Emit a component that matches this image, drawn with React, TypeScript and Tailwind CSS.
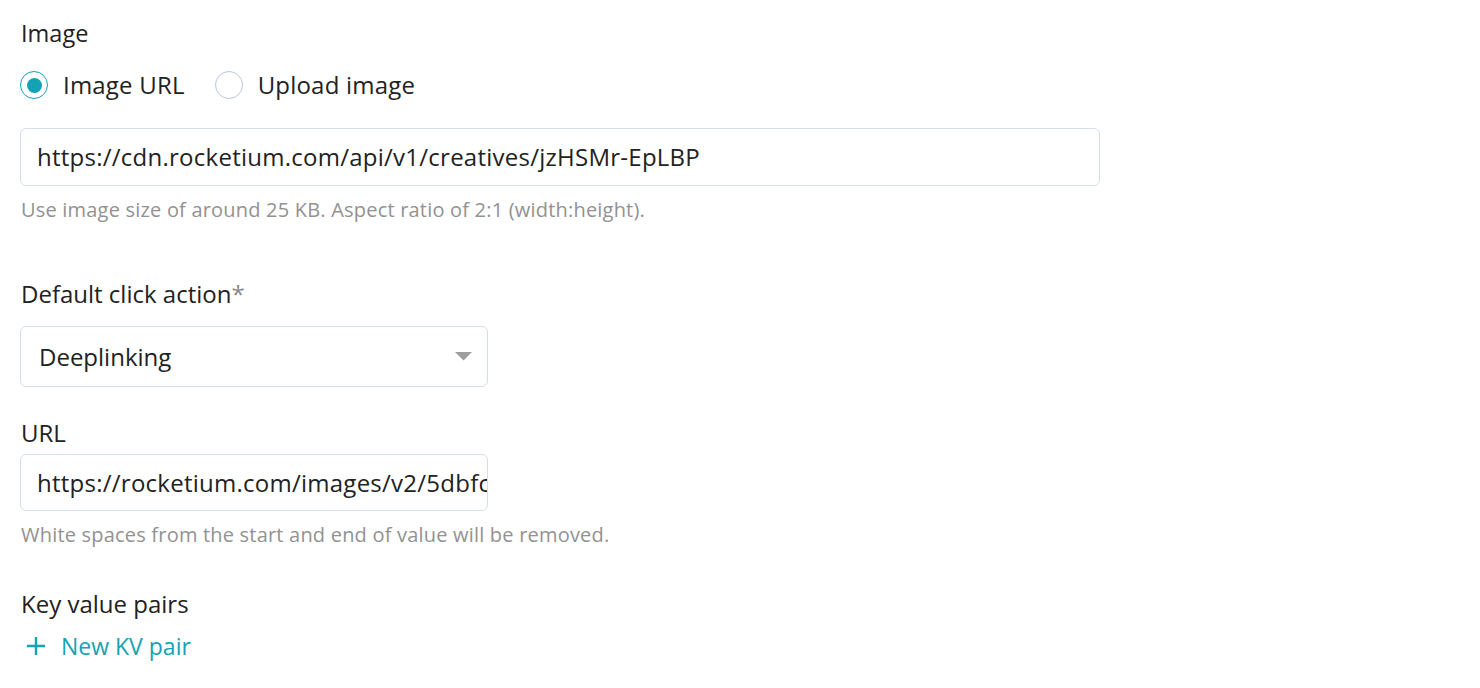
import React from "react";

const teal = "#14a3b4";

function Radio({ checked, label }: { checked: boolean; label: string }) {
  return (
    <div className="flex items-center">
      <div
        className={
          checked
            ? "w-[28px] h-[28px] rounded-full border-[1.5px] border-[#14a3b4] flex items-center justify-center"
            : "w-[28px] h-[28px] rounded-full border border-[#b9c6da] flex items-center justify-center"
        }
      >
        {checked && <div className="w-[15px] h-[15px] rounded-full bg-[#14a3b4]" />}
      </div>
      <span className="ml-[15px] text-[24px] tracking-[0.2px] leading-[28px] text-[#222]">{label}</span>
    </div>
  );
}

export default function App() {
  return (
    <div
      className="w-[1480px] h-[688px] bg-white overflow-hidden pl-[20px] pt-[17px]"
      style={{ fontFamily: "'Open Sans', sans-serif" }}
    >
      <div className="h-[32px] leading-[32px] text-[23.5px] text-[#222] pl-[1px]">Image</div>
      <div className="mt-[22px] flex items-center gap-[30px]">
        <Radio checked label="Image URL" />
        <Radio checked={false} label="Upload image" />
      </div>
      <div className="mt-[29px] w-[1080px] h-[58px] border border-[#d6dde9] rounded-[6px] pl-[16px] flex items-center text-[24px] tracking-[0.25px] text-[#222] whitespace-nowrap overflow-hidden">
        https://cdn.rocketium.com/api/v1/creatives/jzHSMr-EpLBP
      </div>
      <div className="mt-[12px] h-[24px] leading-[24px] text-[20px] tracking-[0.2px] text-[#929292] pl-[1px]">
        Use image size of around 25 KB. Aspect ratio of 2:1 (width:height).
      </div>

      <div className="mt-[56px] h-[32px] leading-[32px] text-[24px] text-[#222] pl-[1px]">
        Default click action<span className="text-[#888]">*</span>
      </div>
      <div className="mt-[16px] w-[468px] h-[61px] border border-[#d6dde9] rounded-[6px] pl-[18px] pr-[15px] flex items-center justify-between text-[24px] text-[#222]">
        <span>Deeplinking</span>
        <svg width="17" height="9" viewBox="0 0 17 9">
          <path d="M0 0 L17 0 L8.5 8.5 Z" fill="#9e9e9e" />
        </svg>
      </div>

      <div className="mt-[30px] h-[32px] leading-[32px] text-[24px] text-[#222] pl-[1px]">URL</div>
      <input
        readOnly
        value="https://rocketium.com/images/v2/5dbfc1f2a3e4b5"
        className="block mt-[5px] w-[468px] h-[57px] border border-[#d6dde9] rounded-[6px] pl-[16px] pr-0 text-[24px] tracking-[0.25px] text-[#222] outline-none"
        style={{ fontFamily: "'Open Sans', sans-serif" }}
      />
      <div className="mt-[12px] h-[24px] leading-[24px] text-[20px] tracking-[0.2px] text-[#929292] pl-[1px]">
        White spaces from the start and end of value will be removed.
      </div>

      <div className="mt-[41px] h-[32px] leading-[32px] text-[24px] text-[#222] pl-[1px]">Key value pairs</div>
      <div className="mt-[10px] h-[32px] flex items-center" style={{ color: teal }}>
        <svg width="20" height="20" viewBox="0 0 20 20" className="ml-[6px]">
          <path d="M10 1 V19 M1 10 H19" stroke={teal} strokeWidth="2.4" />
        </svg>
        <span className="ml-[15px] text-[23px] leading-[32px]">New KV pair</span>
      </div>
    </div>
  );
}
